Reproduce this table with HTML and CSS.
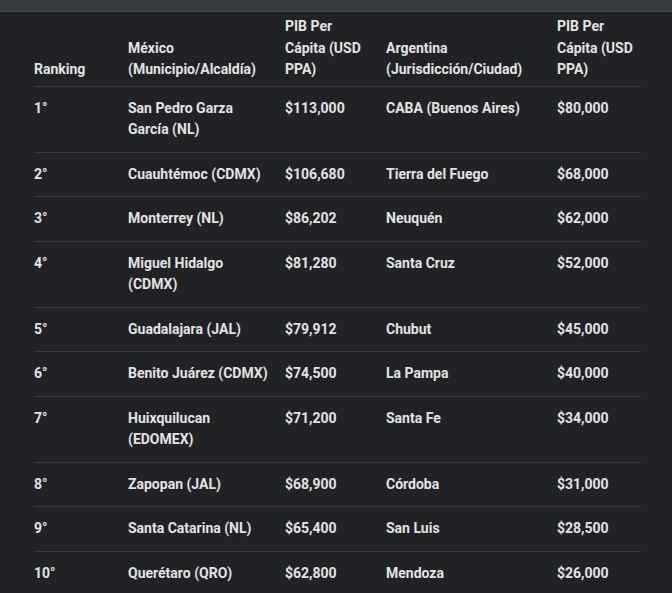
FILE: index.html
```html
<!DOCTYPE html>
<html lang="es">
<head>
<meta charset="utf-8">
<title>PIB per cápita</title>
<link rel="stylesheet" href="styles.css">
</head>
<body>
<div class="topbar"></div>
<div class="wrap">
<table class="ranking">
  <colgroup>
    <col class="c1"><col class="c2"><col class="c3"><col class="c4"><col class="c5">
  </colgroup>
  <thead>
    <tr>
      <th>Ranking</th>
      <th>México (Municipio/Alcaldía)</th>
      <th>PIB Per Cápita (USD PPA)</th>
      <th>Argentina (Jurisdicción/Ciudad)</th>
      <th>PIB Per Cápita (USD PPA)</th>
    </tr>
  </thead>
  <tbody>
    <tr><td>1°</td><td>San Pedro Garza García (NL)</td><td>$113,000</td><td>CABA (Buenos Aires)</td><td>$80,000</td></tr>
    <tr><td>2°</td><td>Cuauhtémoc (CDMX)</td><td>$106,680</td><td>Tierra del Fuego</td><td>$68,000</td></tr>
    <tr><td>3°</td><td>Monterrey (NL)</td><td>$86,202</td><td>Neuquén</td><td>$62,000</td></tr>
    <tr><td>4°</td><td>Miguel Hidalgo (CDMX)</td><td>$81,280</td><td>Santa Cruz</td><td>$52,000</td></tr>
    <tr><td>5°</td><td>Guadalajara (JAL)</td><td>$79,912</td><td>Chubut</td><td>$45,000</td></tr>
    <tr><td>6°</td><td>Benito Juárez (CDMX)</td><td>$74,500</td><td>La Pampa</td><td>$40,000</td></tr>
    <tr><td>7°</td><td>Huixquilucan (EDOMEX)</td><td>$71,200</td><td>Santa Fe</td><td>$34,000</td></tr>
    <tr><td>8°</td><td>Zapopan (JAL)</td><td>$68,900</td><td>Córdoba</td><td>$31,000</td></tr>
    <tr><td>9°</td><td>Santa Catarina (NL)</td><td>$65,400</td><td>San Luis</td><td>$28,500</td></tr>
    <tr><td>10°</td><td>Querétaro (QRO)</td><td>$62,800</td><td>Mendoza</td><td>$26,000</td></tr>
  </tbody>
</table>
</div>
</body>
</html>
```
FILE: styles.css
```css
html, body {
  margin: 0;
  padding: 0;
  background: #212226;
  height: 100%;
  overflow: hidden;
}

.topbar {
  height: 11px;
  background: #353b3e;
  border-bottom: 1px solid #474c50;
}

.wrap {
  padding-left: 34px;
}

.ranking {
  border-collapse: collapse;
  table-layout: fixed;
  width: 607px;
  font-family: Roboto, "Liberation Sans", sans-serif;
  font-weight: 700;
  font-size: 14px;
  line-height: 21.5px;
  color: #e3e3e3;
}

.c1 { width: 94px; }
.c2 { width: 157px; }
.c3 { width: 101px; }
.c4 { width: 171px; }
.c5 { width: 84px; }

.ranking th {
  text-align: left;
  vertical-align: bottom;
  font-weight: 700;
  padding: 4px 12px 5px 0;
}

.ranking td {
  vertical-align: top;
  padding: 11px 12px 11px 0;
}

.ranking th:last-child,
.ranking td:last-child {
  padding-right: 0;
}

.ranking tr {
  border-bottom: 1px solid #3b3c40;
}

.ranking tbody tr:last-child {
  border-bottom: none;
}
```
